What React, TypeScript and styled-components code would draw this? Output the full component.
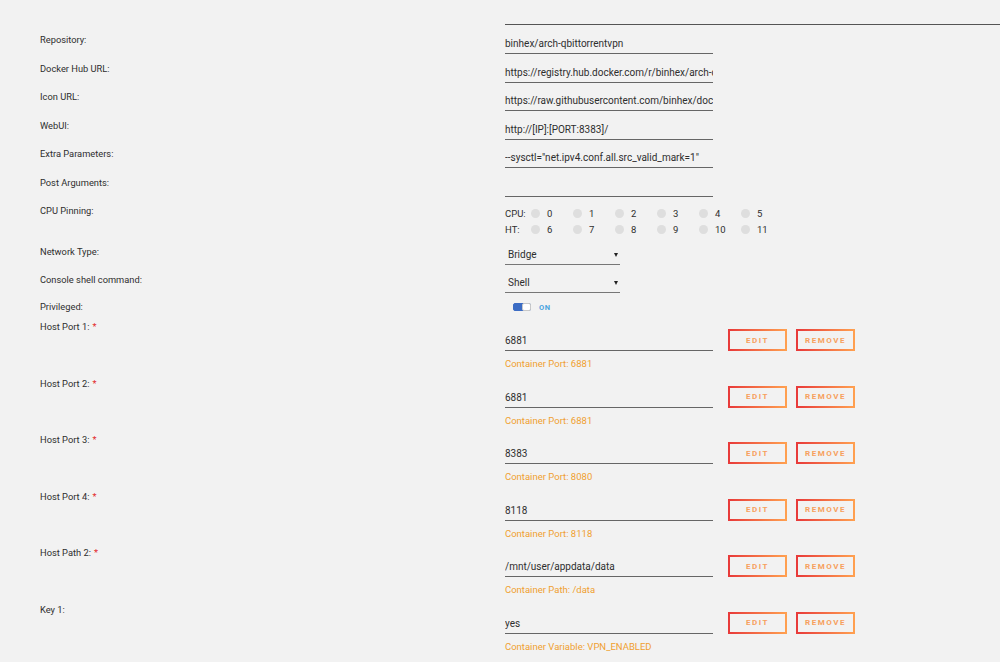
import styled, { createGlobalStyle } from "styled-components";

const GlobalStyle = createGlobalStyle`
  body {
    margin: 0;
    background: #f2f2f2;
    font-family: Roboto, "Liberation Sans", sans-serif;
    color: #333;
  }
`;

const Page = styled.div`
  padding-left: 40px;
  height: 662px;
  overflow: hidden;
`;

const Row = styled.div<{ $h: number }>`
  display: grid;
  grid-template-columns: 465px 1fr;
  height: ${({ $h }) => $h}px;
`;

const TopRule = styled.div`
  height: 24px;
  border-bottom: 1px solid #555;
`;

const Label = styled.div`
  font-size: 9.3px;
  line-height: 14px;
  color: #2e2e2e;
`;

const Star = styled.span`
  color: #e22828;
  margin-left: 3px;
`;

const Value = styled.div<{ $top?: number }>`
  display: flex;
  flex-direction: column;
  padding-top: ${({ $top }) => $top ?? 1}px;
`;

const Field = styled.input`
  box-sizing: border-box;
  width: 208px;
  height: 20px;
  padding: 0;
  border: none;
  border-bottom: 1px solid #666;
  background: transparent;
  font-family: inherit;
  font-size: 10px;
  font-variant-ligatures: none;
  color: #2e2e2e;
  outline: none;
`;

const Select = styled.div`
  box-sizing: border-box;
  width: 115px;
  height: 20px;
  padding: 0 2px 0 3px;
  display: flex;
  align-items: center;
  justify-content: space-between;
  border-bottom: 1px solid #777;
  font-size: 10px;
  color: #2e2e2e;
`;

const Arrow = styled.span`
  width: 0;
  height: 0;
  border-left: 2.5px solid transparent;
  border-right: 2.5px solid transparent;
  border-top: 4px solid #222;
`;

const CpuBlock = styled.div`
  display: flex;
  flex-direction: column;
  padding-top: 1px;
`;

const CpuLine = styled.div`
  display: flex;
  align-items: center;
  height: 16px;
  font-size: 9.5px;
  color: #2e2e2e;
`;

const CpuName = styled.span`
  width: 26px;
`;

const CpuItem = styled.label`
  width: 42px;
  display: flex;
  align-items: center;
  gap: 7px;
`;

const Dot = styled.span`
  width: 9px;
  height: 9px;
  border-radius: 50%;
  background: #dedede;
`;

const SwitchWrap = styled.div`
  display: flex;
  align-items: center;
  gap: 8px;
  padding-left: 8px;
  height: 14px;
`;

const Track = styled.span`
  position: relative;
  box-sizing: border-box;
  width: 18px;
  height: 8px;
  border-radius: 2px;
  background: #3c6cc4;
  border: 1px solid #3c6cc4;
`;

const Knob = styled.span`
  position: absolute;
  right: -1px;
  top: -1px;
  box-sizing: border-box;
  width: 9px;
  height: 8px;
  border-radius: 2px;
  background: #fff;
  border: 1px solid #c8c8c8;
`;

const SwitchText = styled.span`
  font-size: 7.5px;
  font-weight: 700;
  color: #4aa3df;
  letter-spacing: 0.5px;
`;

const FieldLine = styled.div`
  display: flex;
  align-items: flex-end;
`;

const Buttons = styled.div`
  display: flex;
  gap: 9px;
  margin-left: 15px;
`;

const Button = styled.button`
  box-sizing: border-box;
  width: 59px;
  height: 22px;
  padding: 0;
  background: transparent;
  border: 2px solid;
  border-image: linear-gradient(90deg, #e83a3a 0, #ffa050) 1;
  font-family: inherit;
  font-size: 8px;
  font-weight: 700;
  letter-spacing: 1.5px;
  color: #f7a05c;
  text-transform: uppercase;
`;

const Hint = styled.div`
  margin-top: 6px;
  font-size: 9.5px;
  line-height: 14px;
  color: #f0a030;
`;

const basic: [string, string][] = [
  ["Repository:", "binhex/arch-qbittorrentvpn"],
  ["Docker Hub URL:", "https://registry.hub.docker.com/r/binhex/arch-qbittorrentvpn/"],
  ["Icon URL:", "https://raw.githubusercontent.com/binhex/docker-templates/master/binhex/images/qbittorrent-icon.png"],
  ["WebUI:", "http://[IP]:[PORT:8383]/"],
  ["Extra Parameters:", '--sysctl="net.ipv4.conf.all.src_valid_mark=1"'],
  ["Post Arguments:", ""],
];

const ports = [
  { label: "Host Port 1:", value: "6881", hint: "Container Port: 6881" },
  { label: "Host Port 2:", value: "6881", hint: "Container Port: 6881" },
  { label: "Host Port 3:", value: "8383", hint: "Container Port: 8080" },
  { label: "Host Port 4:", value: "8118", hint: "Container Port: 8118" },
  { label: "Host Path 2:", value: "/mnt/user/appdata/data", hint: "Container Path: /data" },
  { label: "Key 1:", value: "yes", hint: "Container Variable: VPN_ENABLED", optional: true },
];

function CpuRow(props: { name: string; cores: number[] }) {
  return (
    <CpuLine>
      <CpuName>{props.name}</CpuName>
      {props.cores.map((c) => (
        <CpuItem key={c}>
          <Dot />
          <span>{c}</span>
        </CpuItem>
      ))}
    </CpuLine>
  );
}

export default function App() {
  return (
    <Page>
      <GlobalStyle />
      <Row $h={33}>
        <div />
        <TopRule />
      </Row>
      {basic.map(([label, value]) => (
        <Row $h={28.5} key={label}>
          <Label>{label}</Label>
          <Value>
            <Field readOnly value={value} />
          </Value>
        </Row>
      ))}
      <Row $h={41}>
        <Label>CPU Pinning:</Label>
        <CpuBlock>
          <CpuRow name="CPU:" cores={[0, 1, 2, 3, 4, 5]} />
          <CpuRow name="HT:" cores={[6, 7, 8, 9, 10, 11]} />
        </CpuBlock>
      </Row>
      <Row $h={28}>
        <Label>Network Type:</Label>
        <Value $top={0}>
          <Select>
            Bridge <Arrow />
          </Select>
        </Value>
      </Row>
      <Row $h={27}>
        <Label>Console shell command:</Label>
        <Value $top={0}>
          <Select>
            Shell <Arrow />
          </Select>
        </Value>
      </Row>
      <Row $h={20}>
        <Label>Privileged:</Label>
        <SwitchWrap>
          <Track>
            <Knob />
          </Track>
          <SwitchText>ON</SwitchText>
        </SwitchWrap>
      </Row>
      {ports.map((p, i) => (
        <Row $h={56.5} key={i}>
          <Label>
            {p.label}
            {!p.optional && <Star>*</Star>}
          </Label>
          <Value $top={9}>
            <FieldLine>
              <Field readOnly value={p.value} />
              <Buttons>
                <Button>Edit</Button>
                <Button>Remove</Button>
              </Buttons>
            </FieldLine>
            <Hint>{p.hint}</Hint>
          </Value>
        </Row>
      ))}
    </Page>
  );
}
